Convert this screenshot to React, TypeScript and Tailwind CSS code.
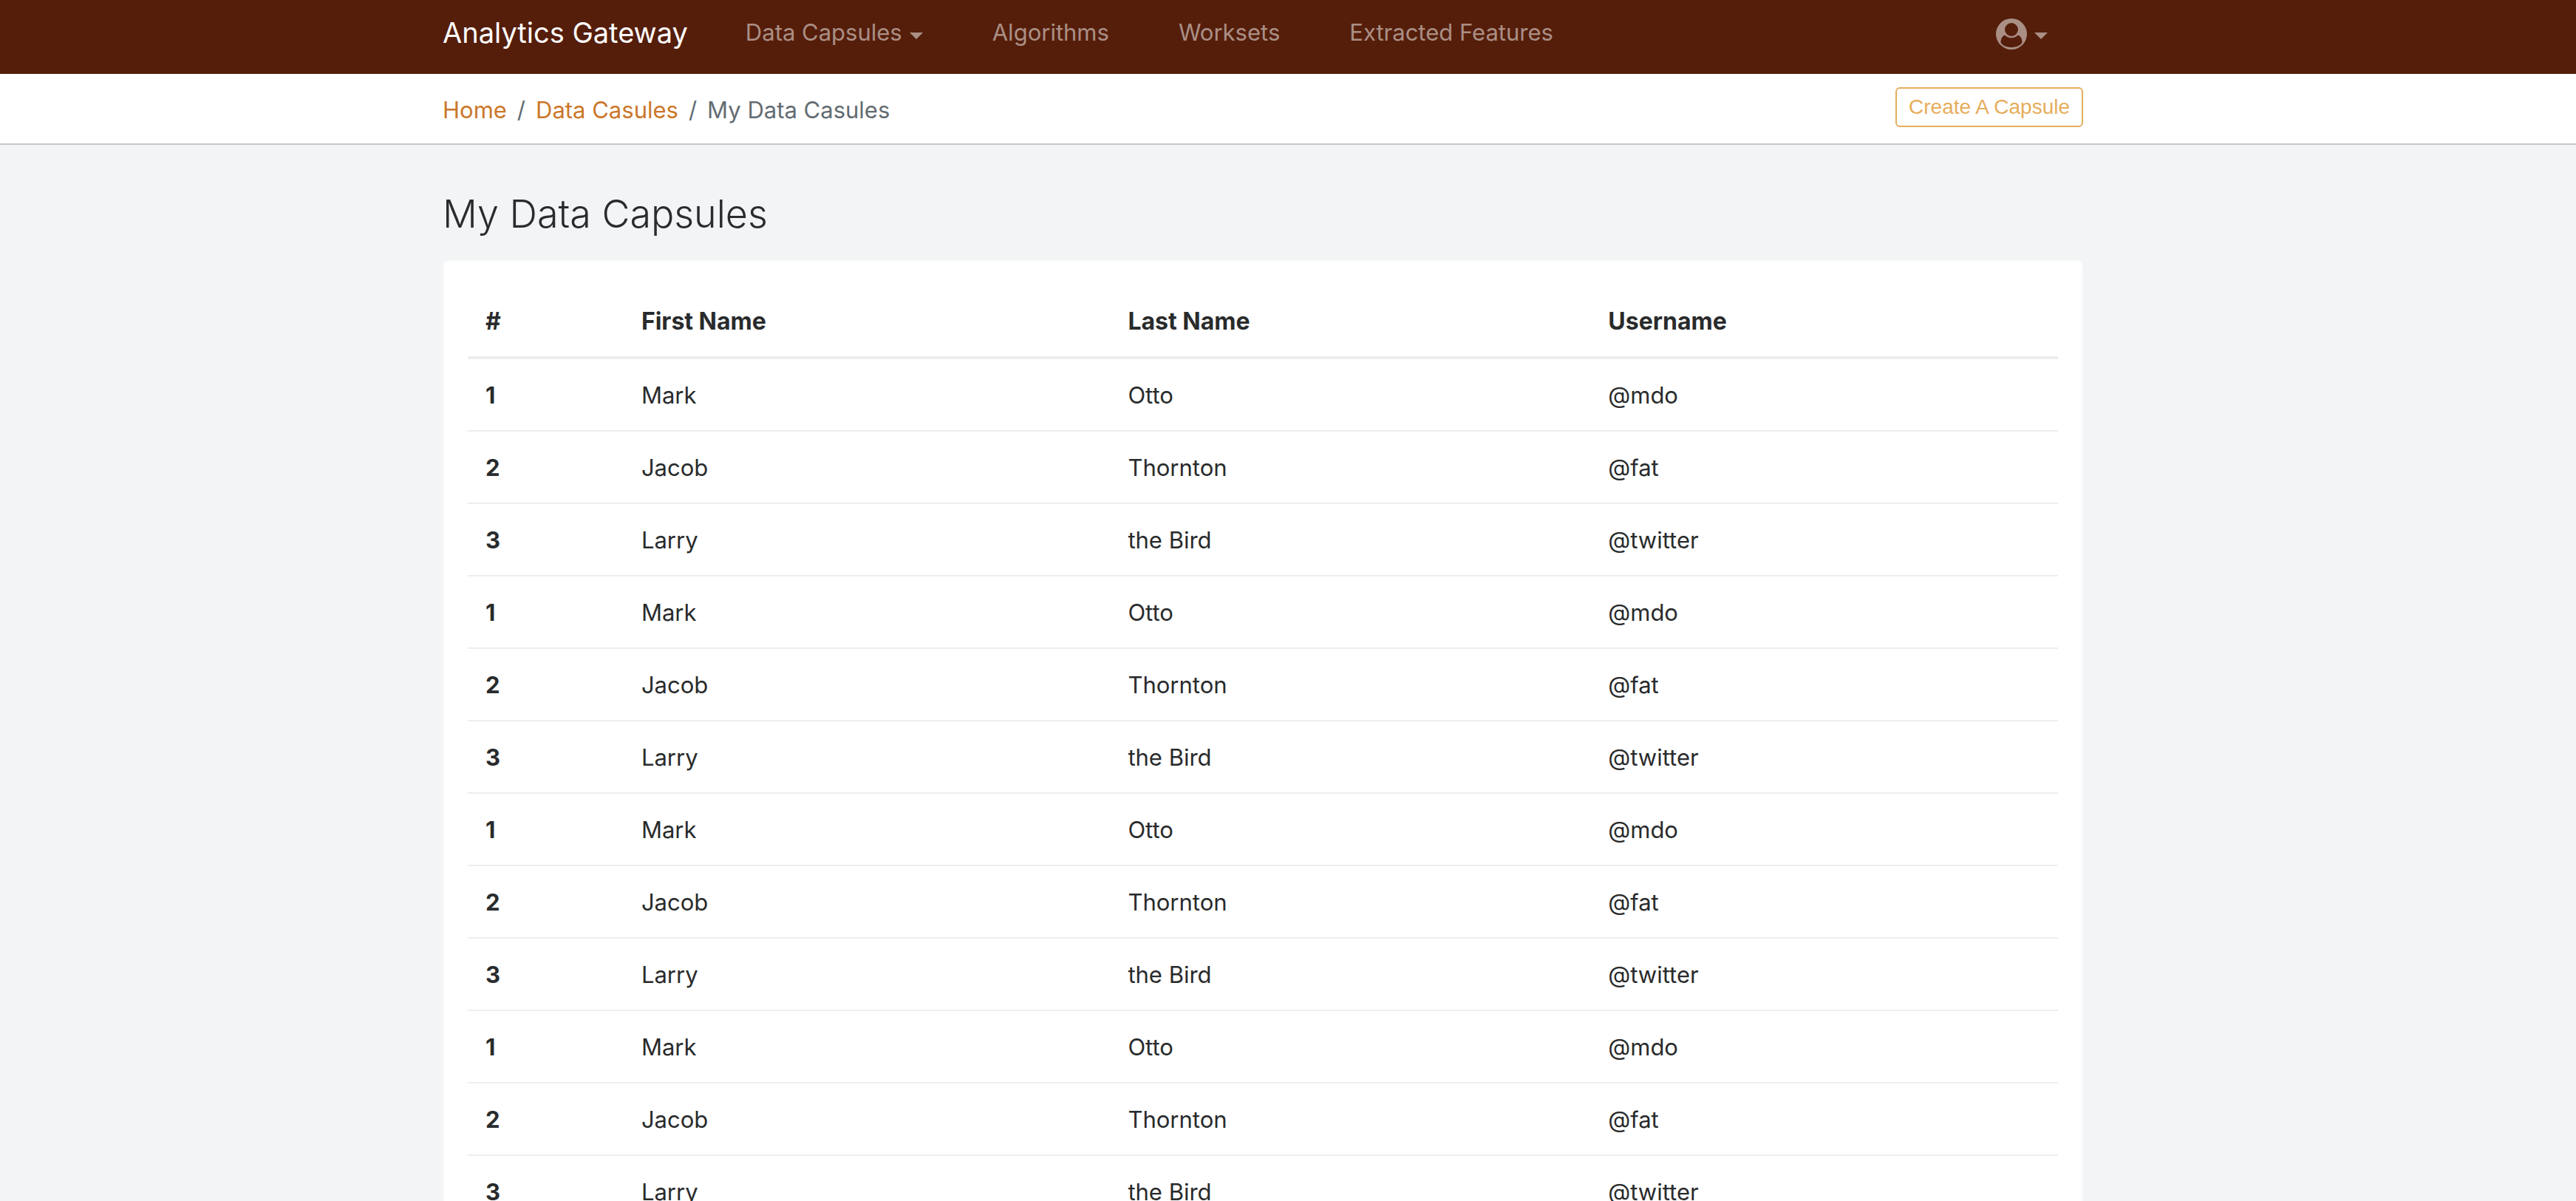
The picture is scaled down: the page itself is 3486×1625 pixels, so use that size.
import type { ReactNode } from "react";

const people = [
  { id: 1, first: "Mark", last: "Otto", user: "@mdo" },
  { id: 2, first: "Jacob", last: "Thornton", user: "@fat" },
  { id: 3, first: "Larry", last: "the Bird", user: "@twitter" },
];

const rows = [...people, ...people, ...people, ...people];

function Container({ children, className = "" }: { children: ReactNode; className?: string }) {
  return (
    <div className="pr-[68px]">
      <div className={`mx-auto max-w-[2220px] ${className}`}>{children}</div>
    </div>
  );
}

function Caret() {
  return (
    <svg aria-hidden="true" viewBox="0 0 18 9" className="mt-2 h-[9px] w-[18px]" fill="currentColor">
      <path d="M0 0h18L9 9z" />
    </svg>
  );
}

function UserIcon() {
  return (
    <svg aria-hidden="true" viewBox="0 0 42 42" className="mt-1 size-[42px]" fill="currentColor">
      <path
        fillRule="evenodd"
        d="M21 0a21 21 0 1 1 0 42a21 21 0 1 1 0-42zM21 6a9 9 0 1 0 0 18a9 9 0 1 0 0-18zM12.500 22.500C8.500 23.500 6.500 27.500 6.500 32.500C9 37 15 39 21 39C27 39 33 37 35.500 32.500C35.500 27.500 33.500 23.500 29.500 22.500C27.500 25 24.500 26.300 21 26.300C17.500 26.300 14.500 25 12.500 22.500z"
      />
    </svg>
  );
}

export default function App() {
  return (
    <div className="min-h-screen bg-[#f2f4f6] font-['Inter','Liberation_Sans',sans-serif] text-[31px] leading-[48px] text-[#292b2c]">
      <nav className="bg-[#551e0b]">
        <Container className="flex h-[100px] items-start pt-4">
          <a href="#" className="mr-[78px] text-[38px] leading-[56px] text-white">
            Analytics Gateway
          </a>
          <div className="flex flex-1 items-center gap-[94px] pt-1 text-[#aa8f85]">
            <button type="button" className="flex items-center gap-[10px]">
              Data Capsules
              <Caret />
            </button>
            <a href="#">Algorithms</a>
            <a href="#">Worksets</a>
            <a href="#">Extracted Features</a>
            <button type="button" aria-label="Account" className="mr-12 ml-auto flex items-center gap-[10px]">
              <UserIcon />
              <Caret />
            </button>
          </div>
        </Container>
      </nav>

      <div className="border-b-2 border-[#c8c8c8] bg-white">
        <Container className="flex h-[94px] items-start justify-between">
          <ol className="flex gap-[14px] pt-[25px] text-[#636c72]">
            <li>
              <a href="#" className="text-[#cb772a]">
                Home
              </a>
            </li>
            <li aria-hidden="true">/</li>
            <li>
              <a href="#" className="text-[#cb772a]">
                Data Casules
              </a>
            </li>
            <li aria-hidden="true">/</li>
            <li>My Data Casules</li>
          </ol>
          <button
            type="button"
            className="mt-[18px] h-[54px] rounded-md border-2 border-[#e6ad5c] px-4 font-['Liberation_Sans',sans-serif] text-[28px] leading-[46px] text-[#e6ad5c]"
          >
            Create A Capsule
          </button>
        </Container>
      </div>

      <main>
        <Container className="pt-[62px]">
          <h1 className="mb-[30px] text-[52px] leading-[64px] font-light">My Data Capsules</h1>
          <div className="rounded-lg border-2 border-[#f9fafa] bg-white p-8">
            <table className="w-full table-fixed text-left">
              <colgroup>
                <col className="w-[9.8%]" />
                <col className="w-[30.6%]" />
                <col className="w-[30.2%]" />
                <col />
              </colgroup>
              <thead className="text-[32px]">
                <tr className="border-b-4 border-[#eceeef]">
                  <th scope="col" className="px-6 pt-[25px] pb-[23px]">#</th>
                  <th scope="col" className="px-6 pt-[25px] pb-[23px]">First Name</th>
                  <th scope="col" className="px-6 pt-[25px] pb-[23px]">Last Name</th>
                  <th scope="col" className="px-6 pt-[25px] pb-[23px]">Username</th>
                </tr>
              </thead>
              <tbody>
                {rows.map((row, i) => (
                  <tr key={i} className="border-b-2 border-[#eceeef]">
                    <th scope="row" className="px-6 pt-[25px] pb-[23px]">{row.id}</th>
                    <td className="px-6 pt-[25px] pb-[23px]">{row.first}</td>
                    <td className="px-6 pt-[25px] pb-[23px]">{row.last}</td>
                    <td className="px-6 pt-[25px] pb-[23px]">{row.user}</td>
                  </tr>
                ))}
              </tbody>
            </table>
          </div>
        </Container>
      </main>
    </div>
  );
}
